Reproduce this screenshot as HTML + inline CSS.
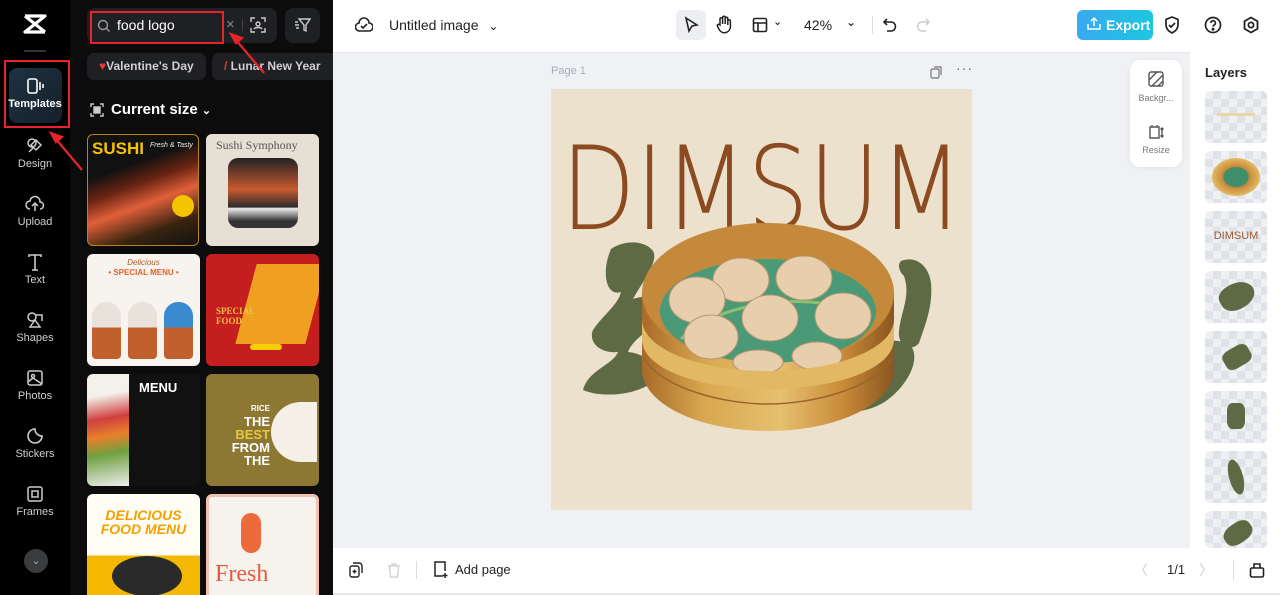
<!DOCTYPE html>
<html><head><meta charset="utf-8"><style>
*{margin:0;padding:0;box-sizing:border-box}
html,body{width:1280px;height:595px;overflow:hidden}
body{font-family:"Liberation Sans",sans-serif;background:#eff1f4;position:relative}
.abs{position:absolute}
#side{left:0;top:0;width:70px;height:595px;background:#000}
#panel{left:70px;top:0;width:263px;height:595px;background:#0c0c0d;overflow:hidden}
.nav{position:absolute;left:0;width:70px;text-align:center;color:#cfcfcf;font-size:11px}
.nav svg{display:block;margin:0 auto 3px}
.th{position:absolute;width:113px;height:112px;border-radius:6px;overflow:hidden}
.chip{position:absolute;top:53px;height:27px;border-radius:7px;background:#1f2023;color:#d0d0d0;font-size:12px;font-weight:bold;line-height:27px;padding-left:12px;white-space:nowrap;overflow:hidden}
#top{left:333px;top:0;width:947px;height:52px;background:#fff}
#bot{left:333px;top:548px;width:947px;height:45px;background:#fff}
#layers{left:1190px;top:52px;width:90px;height:496px;background:#fff;overflow:hidden}
.ly{position:absolute;left:15px;width:62px;height:52px;border-radius:5px;background-color:#eef0f3;background-image:repeating-conic-gradient(#dfe2e6 0 25%,#eef0f3 0 50%);background-size:16px 16px;overflow:hidden}
.red{position:absolute;border:2px solid #e8242b}
</style></head><body>
<div id="side" class="abs">
  <svg class="abs" style="left:22px;top:13px" width="26" height="22" viewBox="0 0 26 22"><path d="M3 3h20L3 19h20M3 3l20 16" stroke="#fff" stroke-width="3.2" fill="none" stroke-linejoin="round"/></svg>
  <div class="abs" style="left:24px;top:50px;width:22px;height:2px;background:#333"></div>
  <div class="abs" style="left:9px;top:68px;width:53px;height:55px;border-radius:8px;background:linear-gradient(135deg,#1d3242,#16202a)"></div>
  <div class="nav" style="top:78px;color:#fff;font-weight:bold"><svg width="18" height="17" viewBox="0 0 18 17"><rect x="2" y="1" width="9" height="14" rx="2" fill="none" stroke="#fff" stroke-width="1.6"/><path d="M14 4v8M17 6v4" stroke="#fff" stroke-width="1.6"/></svg>Templates</div>
  <div class="nav" style="top:137px"><svg width="18" height="18" viewBox="0 0 18 18" fill="none" stroke="#ccc" stroke-width="1.5"><circle cx="6" cy="6" r="4"/><path d="M10 3l5 5-5 5-5-5zM3 15l4-4"/></svg>Design</div>
  <div class="nav" style="top:195px"><svg width="20" height="18" viewBox="0 0 20 18" fill="none" stroke="#ccc" stroke-width="1.5"><path d="M5 14a4 4 0 0 1 0-8 5 5 0 0 1 10 1 3.5 3.5 0 0 1 0 7M10 16V9M7 11l3-3 3 3"/></svg>Upload</div>
  <div class="nav" style="top:253px"><svg width="18" height="18" viewBox="0 0 18 18" fill="none" stroke="#ccc" stroke-width="1.6"><path d="M3 4V2h12v2M9 2v15M6 17h6"/></svg>Text</div>
  <div class="nav" style="top:311px"><svg width="18" height="18" viewBox="0 0 18 18" fill="none" stroke="#ccc" stroke-width="1.5"><circle cx="6" cy="6" r="4"/><path d="M10 4h6v6M4 16l5-7 5 7z"/></svg>Shapes</div>
  <div class="nav" style="top:369px"><svg width="18" height="18" viewBox="0 0 18 18" fill="none" stroke="#ccc" stroke-width="1.5"><rect x="2" y="2" width="14" height="14" rx="2"/><circle cx="7" cy="7" r="1.5"/><path d="M2 13l5-4 9 6"/></svg>Photos</div>
  <div class="nav" style="top:427px"><svg width="18" height="18" viewBox="0 0 18 18" fill="none" stroke="#ccc" stroke-width="1.6"><path d="M9 2a7 7 0 1 0 7 7c-4 0-7-3-7-7z"/></svg>Stickers</div>
  <div class="nav" style="top:485px"><svg width="18" height="18" viewBox="0 0 18 18" fill="none" stroke="#ccc" stroke-width="1.5"><rect x="2" y="2" width="14" height="14" rx="2"/><rect x="6" y="6" width="6" height="6"/></svg>Frames</div>
  <div class="abs" style="left:24px;top:549px;width:24px;height:24px;border-radius:50%;background:#3a3b3e;color:#aaa;font-size:11px;text-align:center;line-height:24px">⌄</div>
  <div class="red" style="left:4px;top:60px;width:66px;height:68px"></div>
</div>
<div id="panel" class="abs">
  <div class="abs" style="left:17px;top:8px;width:190px;height:35px;border-radius:8px;background:#1f2023"></div>
  <svg class="abs" style="left:27px;top:19px" width="14" height="14" viewBox="0 0 14 14" fill="none" stroke="#999" stroke-width="1.4"><circle cx="6" cy="6" r="4.5"/><path d="M9.5 9.5l3 3"/></svg>
  <div class="abs" style="left:47px;top:17px;color:#fff;font-size:14px">food logo</div>
  <div class="abs" style="left:156px;top:16px;color:#888;font-size:15px">×</div>
  <div class="abs" style="left:172px;top:19px;width:1px;height:12px;background:#444"></div>
  <svg class="abs" style="left:180px;top:17px" width="16" height="16" viewBox="0 0 16 16" fill="none" stroke="#ccc" stroke-width="1.4"><path d="M1 5V1h4M11 1h4v4M15 11v4h-4M5 15H1v-4"/><circle cx="8" cy="7" r="2"/><path d="M4 12c1-2 7-2 8 0"/></svg>
  <div class="red" style="left:20px;top:11px;width:134px;height:33px"></div>
  <div class="abs" style="left:215px;top:8px;width:35px;height:35px;border-radius:8px;background:#1f2023"></div>
  <svg class="abs" style="left:224px;top:17px" width="17" height="16" viewBox="0 0 17 16" fill="none" stroke="#ccc" stroke-width="1.4"><path d="M5 2h11l-4 6v6l-2-1V8zM1 5h3M1 8h4M2 11h3"/></svg>
  <div class="chip" style="left:17px;width:119px"><span style="color:#e03a3a">♥</span>Valentine's Day</div>
  <div class="chip" style="left:142px;width:121px;border-radius:7px 0 0 7px"><span style="color:#e03a3a">/</span> Lunar New Year</div>
  <svg class="abs" style="left:20px;top:103px" width="14" height="14" viewBox="0 0 14 14" fill="none" stroke="#ccc" stroke-width="1.4"><path d="M1 4V1h3M10 1h3v3M13 10v3h-3M4 13H1v-3"/><rect x="4" y="4" width="6" height="6" fill="#ccc"/></svg>
  <div class="abs" style="left:41px;top:101px;color:#fff;font-size:15px;font-weight:bold">Current size <span style="font-size:11px">⌄</span></div>
  <div class="th" style="left:17px;top:134px;width:112px;background:linear-gradient(160deg,#111 30%,#6b2412 45%,#e0603a 60%,#3a2410 80%,#111);border:1px solid #b8860b">
    <div class="abs" style="left:4px;top:4px;color:#f5c400;font-size:17px;font-weight:bold">SUSHI</div>
    <div class="abs" style="left:62px;top:7px;color:#eee;font-size:7px;font-style:italic">Fresh &amp; Tasty</div>
    <div class="abs" style="left:84px;top:60px;width:22px;height:22px;border-radius:50%;background:#f5c400"></div>
  </div>
  <div class="th" style="left:136px;top:134px;background:#e6e0d4">
    <div class="abs" style="left:10px;top:4px;color:#555;font-size:12px;font-family:'Liberation Serif',serif">Sushi Symphony</div>
    <div class="abs" style="left:22px;top:24px;width:70px;height:70px;border-radius:10px;background:linear-gradient(180deg,#222,#c85a30 45%,#2c2c2c 70%,#eee 72%,#333 90%)"></div>
  </div>
  <div class="th" style="left:17px;top:254px;background:#f7f3ee">
    <div class="abs" style="left:0;top:4px;width:113px;text-align:center;color:#b05a2a;font-size:8px;font-style:italic">Delicious</div>
    <div class="abs" style="left:0;top:14px;width:113px;text-align:center;color:#e0622c;font-size:8px;font-weight:bold">• SPECIAL MENU •</div>
    <div class="abs" style="left:5px;top:48px;width:29px;height:57px;border-radius:14px 14px 4px 4px;background:linear-gradient(#e8e2da 45%,#c0602c 45%)"></div>
    <div class="abs" style="left:41px;top:48px;width:29px;height:57px;border-radius:14px 14px 4px 4px;background:linear-gradient(#e8e2da 45%,#c0602c 45%)"></div>
    <div class="abs" style="left:77px;top:48px;width:29px;height:57px;border-radius:14px 14px 4px 4px;background:linear-gradient(#3a8ad0 45%,#c0602c 45%)"></div>
  </div>
  <div class="th" style="left:136px;top:254px;background:#c41e1e">
    <div class="abs" style="left:40px;top:10px;width:70px;height:80px;background:#f0a020;transform:skewX(-15deg)"></div>
    <div class="abs" style="left:10px;top:52px;color:#f0c040;font-size:9px;font-weight:bold;font-family:'Liberation Serif',serif">SPECIAL<br>FOOD</div>
    <div class="abs" style="left:44px;top:90px;width:32px;height:6px;background:#f5d000;border-radius:3px"></div>
  </div>
  <div class="th" style="left:17px;top:374px;background:#111">
    <div class="abs" style="left:0;top:0;width:42px;height:112px;background:linear-gradient(170deg,#f4f0ea 20%,#d04040 40%,#e8802a 55%,#70a040 70%,#eee)"></div>
    <div class="abs" style="left:52px;top:6px;color:#fff;font-size:13px;font-weight:bold">MENU</div>
  </div>
  <div class="th" style="left:136px;top:374px;background:#8c7733">
    <div class="abs" style="left:65px;top:28px;width:46px;height:60px;border-radius:30px 0 0 30px;background:#f4f0e8"></div>
    <div class="abs" style="left:16px;top:26px;color:#fff;font-size:13px;font-weight:bold;line-height:13px;text-align:right;width:48px"><span style="font-size:8px">RICE</span><br>THE<br><span style="color:#e8c640">BEST</span><br>FROM<br>THE</div>
  </div>
  <div class="th" style="left:17px;top:494px;background:linear-gradient(#fffdf4 55%,#f5b800 55%)">
    <div class="abs" style="left:0;top:14px;width:113px;text-align:center;color:#f5a000;font-size:14px;font-weight:bold;font-style:italic;line-height:14px">DELICIOUS<br>FOOD MENU</div>
    <div class="abs" style="left:25px;top:62px;width:70px;height:40px;border-radius:50%;background:#2a2a2a"></div>
  </div>
  <div class="th" style="left:136px;top:494px;background:#f6f2ec;border:3px solid #f2c0b0">
    <div class="abs" style="left:32px;top:16px;width:20px;height:40px;border-radius:10px;background:#ef6a3a"></div>
    <div class="abs" style="left:6px;top:64px;color:#e85a40;font-size:24px;font-family:'Liberation Serif',serif">Fresh</div>
  </div>
  <div class="abs" style="left:263px;top:272px;width:7px;height:48px;border-radius:4px 0 0 4px;background:#222"></div>
</div>
<svg class="abs" style="left:0;top:0" width="340" height="180"><g stroke="#e8242b" stroke-width="2.2" fill="#e8242b"><line x1="264" y1="73" x2="236" y2="40"/><path d="M231 34l11 4-6 5z"/><line x1="82" y1="170" x2="55" y2="138"/><path d="M51 133l11 4-6 5z"/></g></svg>

<div id="top" class="abs">
  <svg class="abs" style="left:22px;top:17px" width="18" height="16" viewBox="0 0 18 16" fill="none" stroke="#222" stroke-width="1.6"><path d="M5 14a4 4 0 0 1-1-8 5 5 0 0 1 10 0 4 4 0 0 1 0 8z"/><path d="M6 9l2 2 4-4"/></svg>
  <div class="abs" style="left:56px;top:17px;font-size:14px;color:#222">Untitled image <span style="font-size:12px;margin-left:6px">⌄</span></div>
  <div class="abs" style="left:343px;top:10px;width:30px;height:30px;border-radius:6px;background:#eceef1"></div>
  <svg class="abs" style="left:350px;top:16px" width="16" height="18" viewBox="0 0 16 18" fill="none" stroke="#222" stroke-width="1.6"><path d="M3 2l11 7-5 1-3 5z"/></svg>
  <svg class="abs" style="left:382px;top:15px" width="18" height="19" viewBox="0 0 18 19" fill="none" stroke="#222" stroke-width="1.5"><path d="M5 10V4a1.3 1.3 0 0 1 2.6 0v5V2.5a1.3 1.3 0 0 1 2.6 0V9V3.5a1.3 1.3 0 0 1 2.6 0V10V6a1.3 1.3 0 0 1 2.6 0v6a6 6 0 0 1-11 3l-2-4a1.3 1.3 0 0 1 2.2-1.3z"/></svg>
  <svg class="abs" style="left:419px;top:17px" width="16" height="16" viewBox="0 0 16 16" fill="none" stroke="#222" stroke-width="1.6"><rect x="1.5" y="1.5" width="13" height="13" rx="1.5"/><path d="M1.5 6h13M6 6v8.5"/></svg>
  <div class="abs" style="left:440px;top:15px;font-size:11px">⌄</div>
  <div class="abs" style="left:471px;top:17px;font-size:14px;color:#222">42%</div>
  <div class="abs" style="left:513px;top:15px;font-size:12px">⌄</div>
  <div class="abs" style="left:539px;top:16px;width:1px;height:18px;background:#ddd"></div>
  <svg class="abs" style="left:550px;top:17px" width="14" height="16" viewBox="0 0 14 16" fill="none" stroke="#222" stroke-width="1.6"><path d="M4 2L1 5l3 3M1 5h7a4.5 4.5 0 0 1 0 9H4"/></svg>
  <svg class="abs" style="left:583px;top:17px" width="14" height="16" viewBox="0 0 14 16" fill="none" stroke="#ccc" stroke-width="1.5"><path d="M10 2l3 3-3 3M13 5H6a4.5 4.5 0 0 0 0 9h4"/></svg>
  <div class="abs" style="left:744px;top:10px;width:76px;height:30px;border-radius:6px;background:linear-gradient(90deg,#3aa9f0,#1bc7e0);color:#fff;font-size:14px;font-weight:bold;line-height:30px;padding-left:29px">Export</div>
  <svg class="abs" style="left:754px;top:17px" width="14" height="14" viewBox="0 0 14 14" fill="none" stroke="#fff" stroke-width="1.4"><path d="M1 7v5h12V7M7 9V1M4 4l3-3 3 3"/></svg>
  <svg class="abs" style="left:831px;top:16px" width="16" height="18" viewBox="0 0 16 18" fill="none" stroke="#222" stroke-width="1.7"><path d="M8 1l6 2.5V9c0 4-3 6.5-6 8-3-1.5-6-4-6-8V3.5z"/><path d="M5 9l2 2 4-4"/></svg>
  <svg class="abs" style="left:871px;top:16px" width="18" height="18" viewBox="0 0 18 18" fill="none" stroke="#222" stroke-width="1.7"><circle cx="9" cy="9" r="7.5"/><path d="M6.8 7a2.3 2.3 0 1 1 3 2.2c-.6.3-.8.7-.8 1.4"/><circle cx="9" cy="13.2" r=".6" fill="#222"/></svg>
  <svg class="abs" style="left:909px;top:16px" width="18" height="18" viewBox="0 0 18 18" fill="none" stroke="#222" stroke-width="1.8"><path d="M9 1.5l6.5 3.75v7.5L9 16.5l-6.5-3.75v-7.5z"/><circle cx="9" cy="9" r="2.6"/></svg>
</div>
<div class="abs" style="left:333px;top:52px;width:857px;height:1px;background:#e6e8ec"></div>
<div class="abs" style="left:551px;top:65px;font-size:11px;color:#aab">Page 1</div>
<svg class="abs" style="left:930px;top:66px" width="13" height="13" viewBox="0 0 13 13" fill="none" stroke="#777" stroke-width="1.2"><rect x="1" y="3" width="8" height="9" rx="1.5"/><path d="M4 1h7v8"/></svg>
<div class="abs" style="left:956px;top:60px;font-size:14px;color:#666;letter-spacing:1px">···</div>

<svg class="abs" style="left:551px;top:89px" width="421" height="421" viewBox="0 0 421 421">
  <rect width="421" height="421" fill="#ebe1cd"/>
  <g fill="#5e6a44">
    <path d="M60 160c15-10 35-8 42 2 6 10-10 30-20 48 15-5 30-2 35 8-10 20-35 30-40 45 20 2 30 15 25 30-20 15-55 15-70 8 5-20 30-25 35-38-18 2-30-10-25-22 10-15 25-25 28-38-15 5-20-20-10-43z"/>
    <path d="M350 172c15-6 28 5 30 22 2 22-5 40-12 60-8 10-22 2-20-12 2-20 12-35 5-55-6-6-6-12-3-15z"/>
    <path d="M295 262c20-10 55-15 65-5 10 14-4 40-25 55-18 12-45 15-60 5 15-15 28-30 20-55z"/>
  </g>
  <text x="10" y="140" font-family="DejaVu Sans,Liberation Sans,sans-serif" font-size="116" font-weight="200" fill="#8b4a1f" textLength="402" lengthAdjust="spacingAndGlyphs" style="font-family:'DejaVu Sans ExtraLight','DejaVu Sans',sans-serif;font-weight:200">DIMSUM</text>
  <defs><linearGradient id="w" x1="0" x2="1"><stop offset="0" stop-color="#a86a28"/><stop offset=".25" stop-color="#d8a850"/><stop offset=".55" stop-color="#e6c070"/><stop offset=".8" stop-color="#c88a38"/><stop offset="1" stop-color="#8a5520"/></linearGradient></defs>
  <path d="M91 205v75c0 35 57 62 126 62s126-27 126-62v-75z" fill="url(#w)"/>
  <ellipse cx="217" cy="204" rx="126" ry="70" fill="#c4893a"/>
  <ellipse cx="217" cy="222" rx="108" ry="52" fill="#4a9a78"/>
  <path d="M130 250c40-40 140-50 190-20" stroke="#8cc070" stroke-width="3" fill="none"/>
  <g fill="#e7cfae" stroke="#b89570" stroke-width="1">
    <ellipse cx="190" cy="191" rx="28" ry="22"/><ellipse cx="253" cy="189" rx="28" ry="22"/>
    <ellipse cx="146" cy="211" rx="28" ry="23"/><ellipse cx="219" cy="229" rx="28" ry="23"/>
    <ellipse cx="292" cy="227" rx="28" ry="23"/><ellipse cx="160" cy="248" rx="27" ry="22"/>
    <ellipse cx="207" cy="273" rx="25" ry="12"/><ellipse cx="266" cy="267" rx="25" ry="14"/>
  </g>
  <path d="M91 230c0 30 57 52 126 52s126-22 126-52v20c0 30-57 50-126 50S91 280 91 250z" fill="#e2b864"/>
  <path d="M93 270c20 30 80 45 124 45s104-15 124-45" stroke="#9a6428" stroke-width="1.5" fill="none"/>
</svg>

<div class="abs" style="left:1130px;top:60px;width:52px;height:107px;background:#fff;border-radius:10px;box-shadow:0 1px 6px rgba(0,0,0,.06)">
  <svg class="abs" style="left:18px;top:11px" width="16" height="16" viewBox="0 0 16 16" fill="none" stroke="#555" stroke-width="1.4"><rect x="1" y="1" width="14" height="14" rx="2"/><path d="M1 9L9 1M4 15L15 4M10 15l5-5"/></svg>
  <div class="abs" style="left:0;top:33px;width:52px;text-align:center;font-size:9px;color:#777">Backgr...</div>
  <svg class="abs" style="left:18px;top:64px" width="16" height="16" viewBox="0 0 16 16" fill="none" stroke="#555" stroke-width="1.4"><path d="M2 3h9v11H2zM4 1v2M9 1v2M14 4v9M12.5 5.5L14 4l1.5 1.5M12.5 11.5L14 13l1.5-1.5"/></svg>
  <div class="abs" style="left:0;top:85px;width:52px;text-align:center;font-size:9px;color:#777">Resize</div>
</div>

<div id="layers" class="abs">
  <div class="abs" style="left:15px;top:13px;font-size:13px;font-weight:bold;color:#222">Layers</div>
  <div class="ly" style="top:39px"><div class="abs" style="left:12px;top:22px;width:38px;height:3px;background:#e8d6a8"></div></div>
  <div class="ly" style="top:99px"><div class="abs" style="left:7px;top:7px;width:48px;height:38px;border-radius:50%;background:radial-gradient(#3f8f6a 35%,#c88a38 40%,#e2b864 70%)"></div></div>
  <div class="ly" style="top:159px"><div class="abs" style="left:0;top:19px;width:62px;text-align:center;font-size:11px;color:#9a5a30">DIMSUM</div></div>
  <div class="ly" style="top:219px"><div class="abs" style="left:14px;top:12px;width:36px;height:26px;background:#5e6a44;border-radius:40% 60% 50% 50%;transform:rotate(-30deg)"></div></div>
  <div class="ly" style="top:279px"><div class="abs" style="left:18px;top:16px;width:28px;height:20px;background:#5e6a44;border-radius:30%;transform:rotate(-30deg)"></div></div>
  <div class="ly" style="top:339px"><div class="abs" style="left:22px;top:12px;width:18px;height:26px;background:#5e6a44;border-radius:30%"></div></div>
  <div class="ly" style="top:399px"><div class="abs" style="left:24px;top:8px;width:14px;height:36px;background:#5e6a44;border-radius:50%;transform:rotate(-15deg)"></div></div>
  <div class="ly" style="top:459px;height:37px"><div class="abs" style="left:18px;top:12px;width:30px;height:20px;background:#5e6a44;border-radius:40%;transform:rotate(-35deg)"></div></div>
</div>

<div id="bot" class="abs">
  <svg class="abs" style="left:16px;top:14px" width="14" height="16" viewBox="0 0 14 16" fill="none" stroke="#222" stroke-width="1.4"><rect x="1" y="4" width="9" height="11" rx="2"/><path d="M4 1h6a3 3 0 0 1 3 3v7M5.5 7.5v4M3.5 9.5h4"/></svg>
  <svg class="abs" style="left:54px;top:15px" width="14" height="15" viewBox="0 0 14 15" fill="none" stroke="#ccc" stroke-width="1.3"><path d="M1 3h12M5 3V1h4v2M2.5 3l1 11h7l1-11"/></svg>
  <div class="abs" style="left:83px;top:13px;width:1px;height:18px;background:#ddd"></div>
  <svg class="abs" style="left:100px;top:13px" width="16" height="18" viewBox="0 0 16 18" fill="none" stroke="#222" stroke-width="1.5"><path d="M10 15H2V1h10v9"/><path d="M12 12v5M9.5 14.5h5"/></svg>
  <div class="abs" style="left:122px;top:14px;font-size:13px;color:#222">Add page</div>
  <div class="abs" style="left:801px;top:12px;font-size:14px;color:#ccc">〈</div>
  <div class="abs" style="left:834px;top:14px;font-size:13px;color:#222">1/1</div>
  <div class="abs" style="left:866px;top:12px;font-size:14px;color:#ccc">〉</div>
  <div class="abs" style="left:900px;top:12px;width:1px;height:20px;background:#ddd"></div>
  <svg class="abs" style="left:916px;top:13px" width="16" height="18" viewBox="0 0 16 18" fill="none" stroke="#222" stroke-width="1.6"><rect x="1.5" y="7" width="13" height="9" rx="1.5"/><path d="M5 7V3h6v4"/></svg>
</div>
<div class="abs" style="left:333px;top:593px;width:947px;height:2px;background:#e6e8ec"></div>
</body></html>
